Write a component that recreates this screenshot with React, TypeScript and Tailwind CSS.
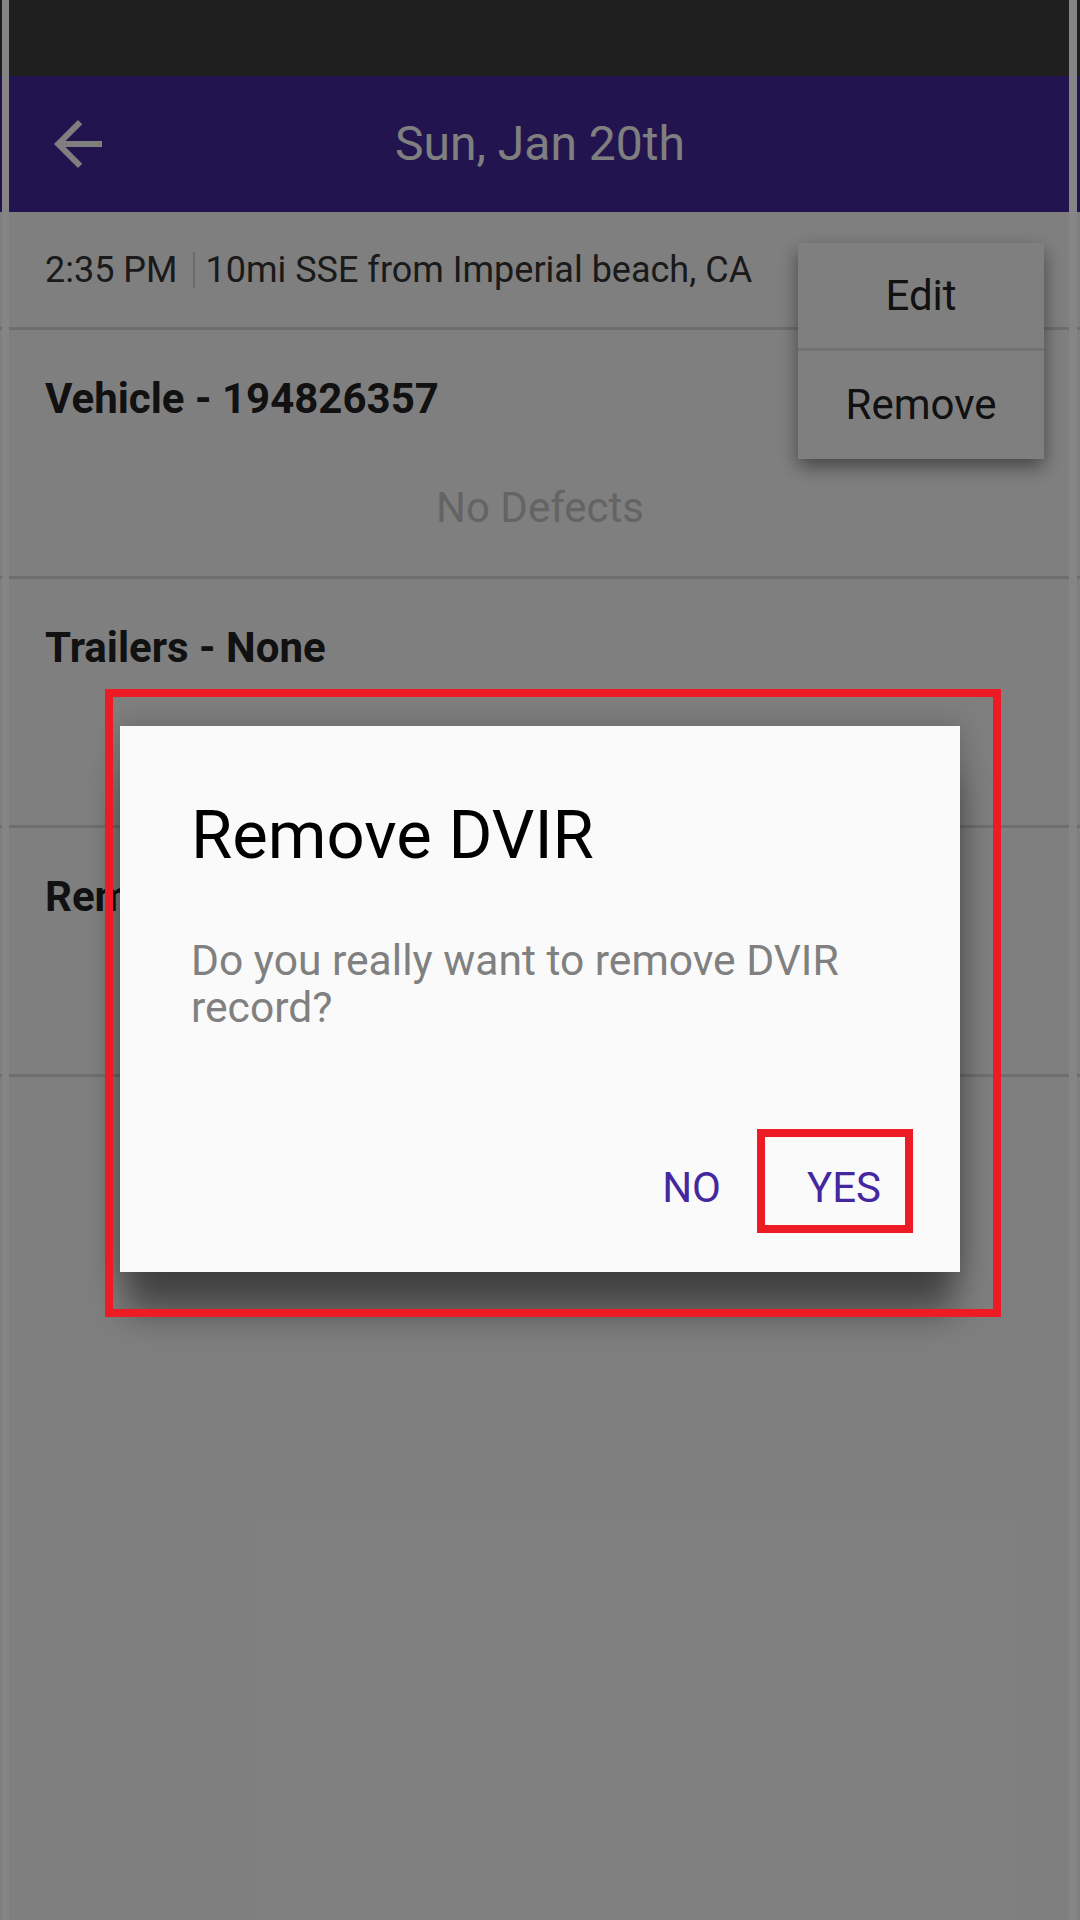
import React from "react";

function BackArrow() {
  return (
    <svg width="72" height="72" viewBox="0 0 24 24" fill="#ffffff">
      <path d="M20 11H7.83l5.59-5.59L12 4l-8 8 8 8 1.41-1.41L7.83 13H20v-2z" />
    </svg>
  );
}

function Divider() {
  return <div className="h-[3px] w-full bg-[#dcdcdc]" />;
}

export default function App() {
  return (
    <div className="relative w-[1080px] h-[1920px] overflow-hidden bg-white font-['Roboto',sans-serif]">
      {/* Page */}
      <div className="flex flex-col">
        <div className="h-[76px] bg-[#3e3e3e]" />
        <div className="h-[136px] bg-[#44289f] flex items-center px-[42px]">
          <div className="w-[72px] h-[72px] flex items-center justify-center">
            <BackArrow />
          </div>
          <div className="flex-1 text-center text-white text-[48px] leading-[58px]">Sun, Jan 20th</div>
          <div className="w-[72px]" />
        </div>
        <div className="h-[115px] flex items-center pl-[45px] text-[36px] leading-[44px] text-[#353535]">
          <span>2:35 PM</span>
          <span className="ml-[15px] mr-[11px] w-[2px] h-[36px] bg-[#d4d4d4]" />
          <span>10mi SSE from Imperial beach, CA</span>
        </div>
        <Divider />
        <div className="h-[246px] pt-[44px]">
          <div className="pl-[45px] text-[42px] leading-[50px] font-bold text-[#222222]">Vehicle - 194826357</div>
          <div className="mt-[59px] text-center text-[42px] leading-[50px] text-[#c8c8c8]">No Defects</div>
        </div>
        <Divider />
        <div className="h-[246px] pt-[44px]">
          <div className="pl-[45px] text-[42px] leading-[50px] font-bold text-[#222222]">Trailers - None</div>
        </div>
        <Divider />
        <div className="h-[246px] pt-[44px]">
          <div className="pl-[45px] text-[42px] leading-[50px] font-bold text-[#222222]">Remarks</div>
        </div>
        <Divider />
      </div>

      {/* Popup menu */}
      <div className="absolute left-[798px] top-[243px] w-[246px] bg-white shadow-[0_8px_18px_rgba(0,0,0,0.45)] flex flex-col text-[42px] leading-[50px] text-[#222222]">
        <div className="h-[105px] flex items-center justify-center">Edit</div>
        <div className="h-[3px] bg-[#e4e4e4]" />
        <div className="h-[108px] flex items-center justify-center">Remove</div>
      </div>

      {/* Dim overlay */}
      <div className="absolute inset-0 bg-black/50" />

      {/* Edge strips */}
      <div className="absolute top-0 left-[2px] w-[7px] h-full bg-[#858585]" />
      <div className="absolute top-0 left-[1069px] w-[8px] h-full bg-[#858585]" />

      {/* Dialog */}
      <div className="absolute left-[120px] top-[726px] w-[840px] h-[546px] bg-[#fafafa] flex flex-col shadow-[0_46px_34px_-6px_rgba(0,0,0,0.45),0_0_28px_rgba(0,0,0,0.22)]">
        <div className="pl-[71px] pr-[60px] pt-[70px]">
          <div className="text-[67px] leading-[78px] text-black">Remove DVIR</div>
          <div className="mt-[63px] text-[42.6px] leading-[47px] text-[#808080]">
            Do you really want to remove DVIR record?
          </div>
        </div>
        <div className="mt-auto flex justify-end items-start pr-[47px] pb-[39px] text-[42px] leading-[50px] text-[#4527a0]">
          <div className="pt-[34px]">NO</div>
          <div className="ml-[36px] w-[156px] h-[104px] border-[8px] border-[#ed1c24] pl-[42px] pt-[26px]">YES</div>
        </div>
      </div>

      {/* Annotation frame */}
      <div className="absolute left-[105px] top-[689px] w-[896px] h-[628px] border-[8px] border-[#ed1c24]" />
    </div>
  );
}
